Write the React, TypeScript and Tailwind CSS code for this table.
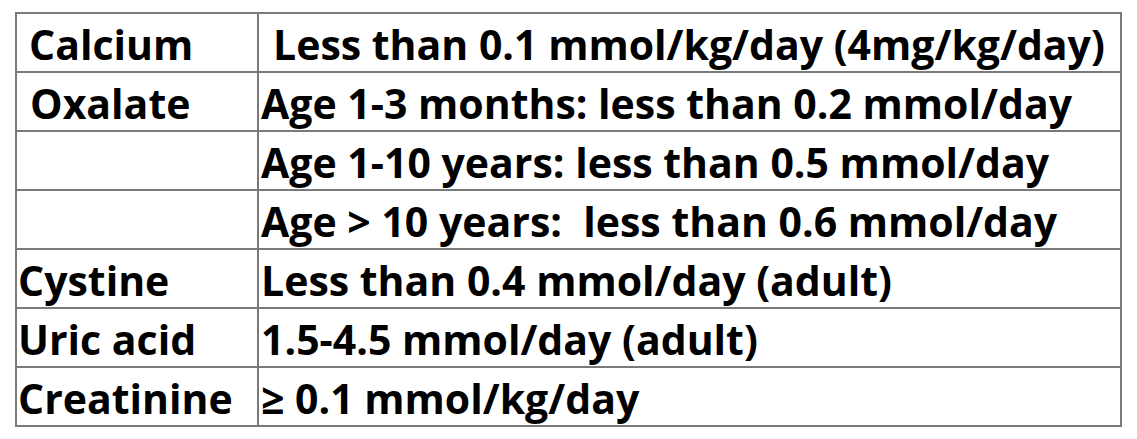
import React from "react";

const rows: { name: string; value: string; namePad: string; valuePad: string }[] = [
  { name: "Calcium", value: "Less than 0.1 mmol/kg/day (4mg/kg/day)", namePad: "pl-[12px]", valuePad: "pl-[14px]" },
  { name: "Oxalate", value: "Age 1-3 months: less than 0.2 mmol/day", namePad: "pl-[13px]", valuePad: "pl-[2px]" },
  { name: "", value: "Age 1-10 years: less than 0.5 mmol/day", namePad: "pl-[2px]", valuePad: "pl-[2px]" },
  { name: "", value: "Age > 10 years:  less than 0.6 mmol/day", namePad: "pl-[2px]", valuePad: "pl-[2px]" },
  { name: "Cystine", value: "Less than 0.4 mmol/day (adult)", namePad: "pl-[1px]", valuePad: "pl-[2px]" },
  { name: "Uric acid", value: "1.5-4.5 mmol/day (adult)", namePad: "pl-[1px]", valuePad: "pl-[2px]" },
  { name: "Creatinine", value: "≥ 0.1 mmol/kg/day", namePad: "pl-[1px]", valuePad: "pl-[2px]" },
];

const App: React.FC = () => {
  return (
    <div className="w-[1137px] h-[439px] bg-white pt-[12px] pl-[15px]">
      <div
        className="w-[1107px] grid grid-cols-[242px_1fr] border-l-2 border-t-2 border-[#7a7a7a] text-black font-bold text-[41px] leading-none"
        style={{ fontFamily: "'Open Sans', 'Liberation Sans', sans-serif" }}
      >
        {rows.map((row, i) => (
          <React.Fragment key={i}>
            <div className={`h-[59px] flex items-center pt-[4px] border-r-2 border-b-2 border-[#7a7a7a] whitespace-pre ${row.namePad}`}>
              {row.name}
            </div>
            <div className={`h-[59px] flex items-center pt-[4px] border-r-2 border-b-2 border-[#7a7a7a] whitespace-pre ${row.valuePad}`}>
              {row.value}
            </div>
          </React.Fragment>
        ))}
      </div>
    </div>
  );
};

export default App;
